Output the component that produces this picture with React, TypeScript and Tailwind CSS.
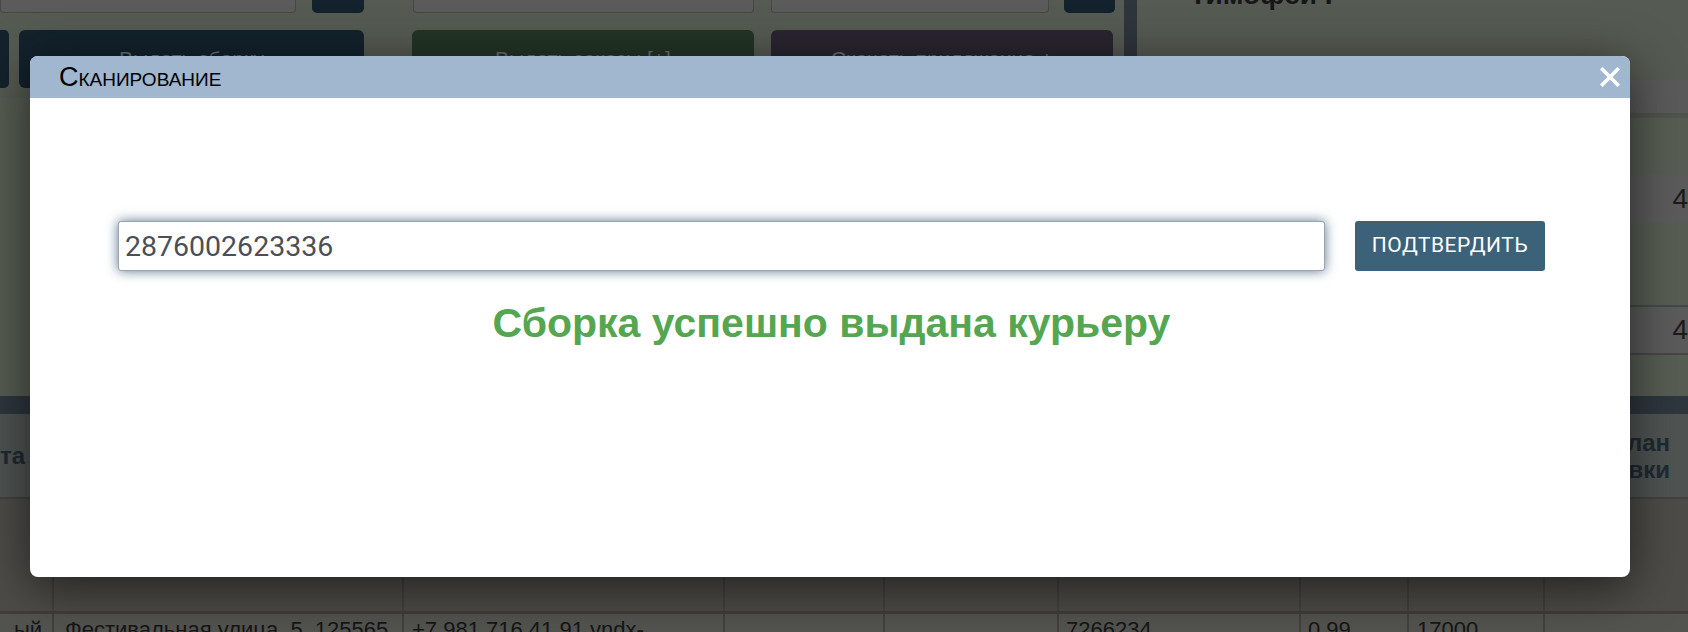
import React from "react";

const cols = "grid grid-cols-[52px_350px_321px_160px_174px_242px_108px_136px_1fr]";

function RightRows() {
  const rows: { h: number; c: string; t?: string }[] = [
    { h: 33, c: "bg-[#5a5a5a]" },
    { h: 5, c: "bg-[#4f544c]" },
    { h: 57, c: "bg-[#575d53]" },
    { h: 48, c: "bg-[#5b5b5b]", t: "4" },
    { h: 82, c: "bg-[#575d53]" },
    { h: 2, c: "bg-[#474747]" },
    { h: 46, c: "bg-[#5b5b5b]", t: "4" },
    { h: 2, c: "bg-[#474747]" },
    { h: 41, c: "bg-[#575d53]" },
  ];
  return (
    <>
      {rows.map((r, i) => (
        <div
          key={i}
          className={`${r.c} flex items-center pl-[535px] text-[28px] text-[#1c1c1c] whitespace-nowrap`}
          style={{ height: r.h }}
        >
          {r.t}
        </div>
      ))}
    </>
  );
}

export default function App() {
  return (
    <div className="relative w-[1688px] h-[632px] overflow-hidden bg-[#555a52] font-['Liberation_Sans',Arial,sans-serif]">
      {/* dimmed page behind the dialog */}
      <div className="flex h-[396px]">
        <div className="w-[1130px] flex flex-col">
          <div className="flex h-[13px]">
            <div className="w-[296px] bg-[#5b5b5b] border border-t-0 border-[#474747] rounded-b-[4px]" />
            <div className="ml-[16px] w-[52px] bg-[#13222c] rounded-b-[5px]" />
            <div className="ml-[49px] w-[341px] bg-[#5b5b5b] border border-t-0 border-[#474747] rounded-b-[4px]" />
            <div className="ml-[17px] w-[278px] bg-[#5b5b5b] border border-t-0 border-[#474747] rounded-b-[4px]" />
            <div className="ml-[15px] w-[51px] bg-[#13222c] rounded-b-[5px]" />
          </div>
          <div className="flex mt-[17px] h-[58px] text-[21px] text-[#6a6d70]">
            <div className="w-[9px] bg-[#13222c] rounded-r-[5px]" />
            <div className="ml-[10px] w-[345px] bg-[#13222c] rounded-[6px] flex items-center justify-center">
              Выдать сборку
            </div>
            <div className="ml-[48px] w-[342px] bg-[#233426] rounded-[6px] flex items-center justify-center">
              Выдать заказы [+]
            </div>
            <div className="ml-[17px] w-[342px] bg-[#2a2530] rounded-[6px] flex items-center justify-center">
              Скачать приложение +
            </div>
          </div>
          <div className="flex-1 mt-[10px] bg-[#575d53]" />
        </div>
        <div className="w-[13px] bg-[#2e353b]" />
        <div className="flex-1 flex flex-col">
          <div className="h-[80px] pl-[52px]">
            <div className="-mt-[20px] text-[28px] font-bold text-[#161616] leading-[30px]">Тимофей Г</div>
          </div>
          <RightRows />
        </div>
      </div>

      {/* table */}
      <div className="h-[18px] bg-[#2e373e]" />
      <div className={`${cols} h-[83px] bg-[#4f5452] text-[24px] font-bold text-[#1f2a33] leading-[27px]`}>
        <div className="flex items-center justify-start overflow-hidden">та</div>
        {Array.from({ length: 7 }).map((_, i) => (
          <div key={i} className="border-l-2 border-[#464a48]" />
        ))}
        <div className="border-l-2 border-[#464a48] flex items-center justify-end pr-[18px] text-right">
          План
          <br />
          доставки
        </div>
      </div>
      <div className="h-[2px] bg-[#414240]" />
      <div className={`${cols} h-[112px] bg-[#4d4c48]`}>
        <div />
        {Array.from({ length: 8 }).map((_, i) => (
          <div key={i} className="border-l-2 border-[#42413e]" />
        ))}
      </div>
      <div className="h-[3px] bg-[#3e3e3b]" />
      <div className={`${cols} h-[30px] bg-[#53534f] text-[22px] leading-[26px] text-[#161616] whitespace-nowrap overflow-hidden`}>
        <div className="flex justify-end pr-[10px] pt-[3px] overflow-hidden">ый</div>
        <div className="border-l-2 border-[#42413e] pl-[11px] pt-[3px] overflow-hidden">Фестивальная улица, 5, 125565</div>
        <div className="border-l-2 border-[#42413e] pl-[8px] pt-[3px] overflow-hidden">+7 981 716 41 91 yndx-</div>
        <div className="border-l-2 border-[#42413e]" />
        <div className="border-l-2 border-[#42413e]" />
        <div className="border-l-2 border-[#42413e] pl-[7px] pt-[3px]">7266234</div>
        <div className="border-l-2 border-[#42413e] pl-[7px] pt-[3px]">0.99</div>
        <div className="border-l-2 border-[#42413e] pl-[8px] pt-[3px]">17000</div>
        <div className="border-l-2 border-[#42413e]" />
      </div>

      {/* dialog */}
      <div className="absolute inset-0 pl-[30px] pt-[56px]">
        <div className="w-[1600px] h-[521px] bg-white rounded-[8px] overflow-hidden shadow-[0_10px_50px_rgba(0,0,0,0.6)] flex flex-col">
          <div className="h-[42px] shrink-0 bg-[#a1b7d0] flex items-center justify-between pl-[29px] pr-[10px]">
            <span className="text-[27px] leading-none text-black [font-variant:small-caps] font-['Liberation_Sans',Arial,sans-serif]">
              Сканирование
            </span>
            <svg width="20" height="20" viewBox="0 0 20 20" className="block">
              <path d="M2.5 2.5 L17.5 17.5 M17.5 2.5 L2.5 17.5" stroke="#ffffff" strokeWidth="3.6" strokeLinecap="square" />
            </svg>
          </div>
          <div className="flex-1 flex flex-col pt-[123px] pl-[88px] pr-[85px]">
            <div className="flex gap-[30px] h-[50px]">
              <input
                readOnly
                value="2876002623336"
                className="flex-1 min-w-0 h-[50px] bg-white border border-[#9aa4ad] rounded-[3px] pl-[6px] text-[28.5px] text-[#4b5056] font-['Roboto',sans-serif] outline-none shadow-[0_0_12px_rgba(50,85,115,0.8)]"
              />
              <button className="w-[190px] h-[50px] bg-[#3c627a] rounded-[3px] text-white text-[21px] font-['Roboto',sans-serif] tracking-[0.5px]">
                ПОДТВЕРДИТЬ
              </button>
            </div>
            <div className="mt-[28px] text-center text-[41px] leading-[48px] font-bold text-[#55a650]">
              Сборка успешно выдана курьеру
            </div>
          </div>
        </div>
      </div>
    </div>
  );
}
